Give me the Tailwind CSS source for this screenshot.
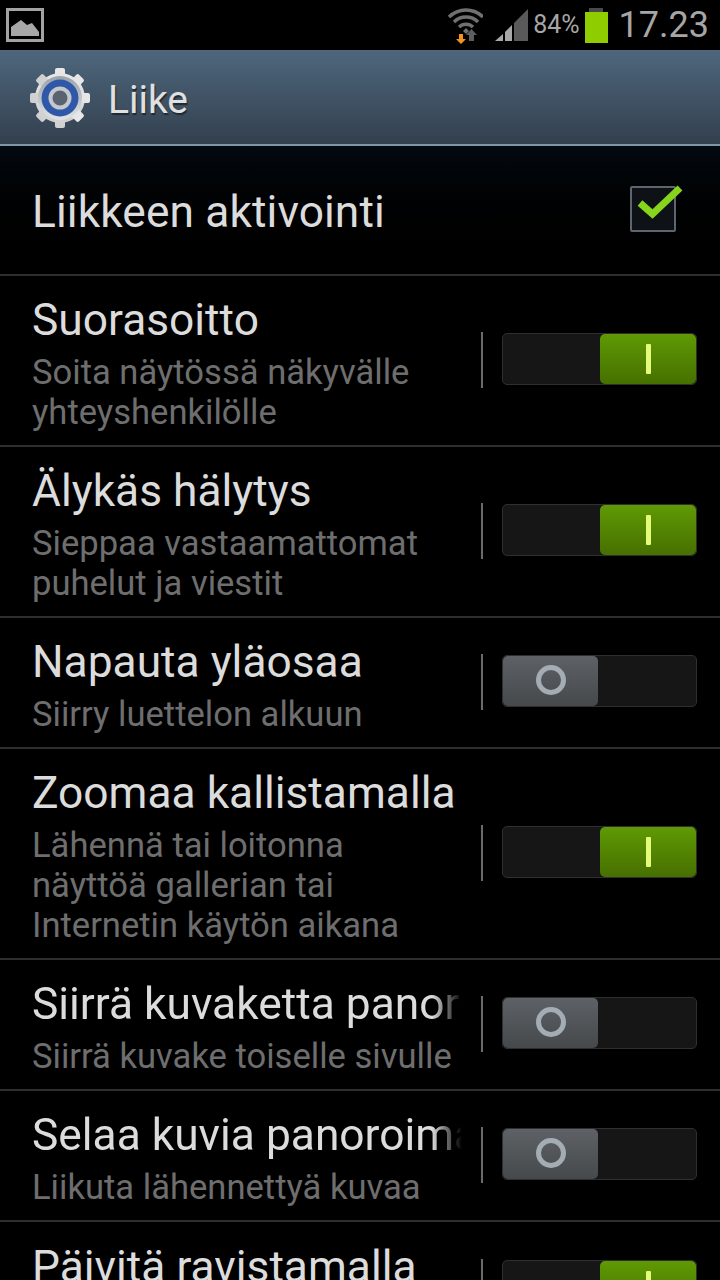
<!DOCTYPE html>
<html lang="fi">
<head>
<meta charset="UTF-8">
<meta name="viewport" content="width=device-width, initial-scale=1.0">
<title>Liike</title>
<script src="https://cdn.jsdelivr.net/npm/@tailwindcss/browser@4"></script>
</head>
<body class="bg-black font-['Roboto',sans-serif]">
<div class="w-[720px] h-[1280px] overflow-hidden bg-black flex flex-col">

  <!-- Status bar -->
  <div class="h-[50px] shrink-0 flex items-center bg-black">
    <svg class="ml-[6px]" width="38" height="34" viewBox="0 0 38 34">
      <rect x="1.5" y="1.5" width="35" height="31" fill="none" stroke="#a3a3a3" stroke-width="3"/>
      <path d="M5 28V19L15 12L21 17L26 15L33 24V28Z" fill="#a8a8a8"/>
    </svg>
    <div class="ml-auto flex items-center">
      <svg width="38" height="40" viewBox="0 0 38 40" class="mt-[1px]">
        <path d="M4 11A24 24 0 0 1 38 11" fill="none" stroke="#707070" stroke-width="3.500"/>
        <path d="M9 16A17 17 0 0 1 33 16" fill="none" stroke="#707070" stroke-width="3.500"/>
        <path d="M14 21A10 10 0 0 1 28 21" fill="none" stroke="#707070" stroke-width="3.500"/>
        <path d="M18 25L21 22L24 25L21 28Z" fill="#707070"/>
        <path d="M24 35V29H21L26.500 23L32 29H29V35Z" fill="#5e5e5e"/>
        <path d="M14 28H18V33H21L16 38L11 33H14Z" fill="#f0941e"/>
      </svg>
      <svg class="ml-[11px]" width="34" height="32" viewBox="0 0 34 32">
        <path d="M1 32L9 25V32Z" fill="#a8a8a8"/>
        <path d="M11 23L18 16V32H11Z" fill="#a8a8a8"/>
        <path d="M20 14L34 0V32H20Z" fill="#5a5a5a"/>
      </svg>
      <span class="ml-[5px] text-[25px] leading-[28px] text-[#a6a6a6]">84%</span>
      <div class="ml-[5px] flex flex-col items-center mt-[1px]">
        <div class="w-[14px] h-[4px] bg-[#4a4a4a]"></div>
        <div class="w-[23px] h-[31px] bg-[#8fcc00]"></div>
      </div>
      <span class="ml-[11px] mr-[11px] text-[36px] leading-[40px] text-[#a6a6a6]">17.23</span>
    </div>
  </div>

  <!-- Action bar -->
  <div class="h-[96px] shrink-0 flex items-center bg-gradient-to-b from-[#4e677d] to-[#33404e] border-b-2 border-[#7f96a8]">
    <svg class="ml-[29px] mt-[1px]" width="62" height="62" viewBox="0 0 62 62">
      <defs>
        <linearGradient id="gear" x1="0" y1="0" x2="0" y2="1"><stop offset="0" stop-color="#e8e8e8"/><stop offset="1" stop-color="#cfcfcf"/></linearGradient>
        <linearGradient id="rim" x1="0" y1="0" x2="0" y2="1"><stop offset="0" stop-color="#9aa2aa"/><stop offset="1" stop-color="#e2e4e6"/></linearGradient>
      </defs>
      <g fill="url(#gear)">
        <circle cx="31" cy="31" r="25"/>
        <rect x="26" y="1" width="10" height="60" rx="2"/>
        <rect x="26" y="1" width="10" height="60" rx="2" transform="rotate(45 31 31)"/>
        <rect x="26" y="1" width="10" height="60" rx="2" transform="rotate(90 31 31)"/>
        <rect x="26" y="1" width="10" height="60" rx="2" transform="rotate(135 31 31)"/>
      </g>
      <circle cx="31" cy="31" r="22" fill="url(#rim)"/>
      <circle cx="31" cy="31" r="18.500" fill="#2f58a8"/>
      <circle cx="31" cy="31" r="9.500" fill="#5a6470" stroke="#c4c8cc" stroke-width="4"/>
    </svg>
    <span class="ml-[17px] mt-[6px] text-[39px] leading-[44px] text-[#e0e0e0] [text-shadow:1px_2px_1px_#1f2933]">Liike</span>
  </div>

  <!-- List -->
  <div class="flex-1 min-h-0">
    <div class="h-[130px] flex items-center justify-between pl-[32px] bg-gradient-to-b from-[#030a10] to-black border-b-2 border-[#2e2e2e]">
      <span class="text-[44.300px] leading-[56px] tracking-[0.1px] text-[#dcdcdc] mt-[4px]">Liikkeen aktivointi</span>
      <div class="relative mr-[44px] mt-[-2px] w-[46px] h-[46px] bg-[#0e1216] border-2 border-[#5d666e] rounded-[2px]">
        <svg class="absolute left-[5px] top-[-4px]" width="48" height="40" viewBox="0 0 48 40">
          <path d="M3 19L15.500 30L43 4" fill="none" stroke="#86d41c" stroke-width="7"/>
        </svg>
      </div>
    </div>

    <div class="h-[171px] flex items-center border-b-2 border-[#2e2e2e]">
      <div class="pl-[32px] w-[462px] shrink-0 mt-[6px]">
        <p class="text-[44.300px] leading-[48px] text-[#dcdcdc]">Suorasoitto</p>
        <p class="text-[34.600px] leading-[40px] text-[#6e6e6e] mt-[8px]">Soita näytössä näkyvälle yhteyshenkilölle</p>
      </div>
      <div class="ml-[19px] mt-[-2px] w-[2px] h-[56px] bg-[#6a6a6a]"></div>
      <div class="ml-[19px] mt-[-4px] w-[195px] h-[52px] flex justify-end bg-[#161616] border border-[#2f2f2f] rounded-[5px]">
        <div class="w-[96px] h-full flex items-center justify-center rounded-[5px] bg-gradient-to-b from-[#5f9a05] to-[#467000]"><div class="w-[5px] h-[30px] bg-[#e4fc7a] rounded-[1px]"></div></div>
      </div>
    </div>

    <div class="h-[171px] flex items-center border-b-2 border-[#2e2e2e]">
      <div class="pl-[32px] w-[462px] shrink-0 mt-[6px]">
        <p class="text-[44.300px] leading-[48px] text-[#dcdcdc]">Älykäs hälytys</p>
        <p class="text-[34.600px] leading-[40px] text-[#6e6e6e] mt-[8px]">Sieppaa vastaamattomat puhelut ja viestit</p>
      </div>
      <div class="ml-[19px] mt-[-2px] w-[2px] h-[56px] bg-[#6a6a6a]"></div>
      <div class="ml-[19px] mt-[-4px] w-[195px] h-[52px] flex justify-end bg-[#161616] border border-[#2f2f2f] rounded-[5px]">
        <div class="w-[96px] h-full flex items-center justify-center rounded-[5px] bg-gradient-to-b from-[#5f9a05] to-[#467000]"><div class="w-[5px] h-[30px] bg-[#e4fc7a] rounded-[1px]"></div></div>
      </div>
    </div>

    <div class="h-[131px] flex items-center border-b-2 border-[#2e2e2e]">
      <div class="pl-[32px] w-[462px] shrink-0 mt-[6px]">
        <p class="text-[44.300px] leading-[48px] text-[#dcdcdc]">Napauta yläosaa</p>
        <p class="text-[34.600px] leading-[40px] text-[#6e6e6e] mt-[8px]">Siirry luettelon alkuun</p>
      </div>
      <div class="ml-[19px] mt-[-2px] w-[2px] h-[56px] bg-[#6a6a6a]"></div>
      <div class="ml-[19px] mt-[-4px] w-[195px] h-[52px] flex bg-[#161616] border border-[#2f2f2f] rounded-[5px]">
        <div class="w-[95px] h-full flex items-center justify-center rounded-[5px] bg-gradient-to-b from-[#5e6266] to-[#45494c]"><div class="w-[30px] h-[30px] mb-[2px] rounded-full border-[5px] border-[#a3adb3]"></div></div>
      </div>
    </div>

    <div class="h-[211px] flex items-center border-b-2 border-[#2e2e2e]">
      <div class="pl-[32px] w-[462px] shrink-0 mt-[6px]">
        <p class="text-[44.300px] leading-[48px] text-[#dcdcdc] whitespace-nowrap">Zoomaa kallistamalla</p>
        <p class="text-[34.600px] leading-[40px] text-[#6e6e6e] mt-[8px]">Lähennä tai loitonna näyttöä gallerian tai Internetin käytön aikana</p>
      </div>
      <div class="ml-[19px] mt-[-2px] w-[2px] h-[56px] bg-[#6a6a6a]"></div>
      <div class="ml-[19px] mt-[-4px] w-[195px] h-[52px] flex justify-end bg-[#161616] border border-[#2f2f2f] rounded-[5px]">
        <div class="w-[96px] h-full flex items-center justify-center rounded-[5px] bg-gradient-to-b from-[#5f9a05] to-[#467000]"><div class="w-[5px] h-[30px] bg-[#e4fc7a] rounded-[1px]"></div></div>
      </div>
    </div>

    <div class="h-[131px] flex items-center border-b-2 border-[#2e2e2e]">
      <div class="pl-[32px] w-[462px] shrink-0 mt-[6px]">
        <p class="text-[44.300px] leading-[48px] text-[#dcdcdc] whitespace-nowrap overflow-hidden [mask-image:linear-gradient(to_right,black_93%,transparent)]">Siirrä kuvaketta panoroimalla</p>
        <p class="text-[34.600px] leading-[40px] text-[#6e6e6e] mt-[8px] whitespace-nowrap">Siirrä kuvake toiselle sivulle</p>
      </div>
      <div class="ml-[19px] mt-[-2px] w-[2px] h-[56px] bg-[#6a6a6a]"></div>
      <div class="ml-[19px] mt-[-4px] w-[195px] h-[52px] flex bg-[#161616] border border-[#2f2f2f] rounded-[5px]">
        <div class="w-[95px] h-full flex items-center justify-center rounded-[5px] bg-gradient-to-b from-[#5e6266] to-[#45494c]"><div class="w-[30px] h-[30px] mb-[2px] rounded-full border-[5px] border-[#a3adb3]"></div></div>
      </div>
    </div>

    <div class="h-[131px] flex items-center border-b-2 border-[#2e2e2e]">
      <div class="pl-[32px] w-[462px] shrink-0 mt-[6px]">
        <p class="text-[44.300px] leading-[48px] text-[#dcdcdc] whitespace-nowrap overflow-hidden [mask-image:linear-gradient(to_right,black_93%,transparent)]">Selaa kuvia panoroimalla</p>
        <p class="text-[34.600px] leading-[40px] text-[#6e6e6e] mt-[8px]">Liikuta lähennettyä kuvaa</p>
      </div>
      <div class="ml-[19px] mt-[-2px] w-[2px] h-[56px] bg-[#6a6a6a]"></div>
      <div class="ml-[19px] mt-[-4px] w-[195px] h-[52px] flex bg-[#161616] border border-[#2f2f2f] rounded-[5px]">
        <div class="w-[95px] h-full flex items-center justify-center rounded-[5px] bg-gradient-to-b from-[#5e6266] to-[#45494c]"><div class="w-[30px] h-[30px] mb-[2px] rounded-full border-[5px] border-[#a3adb3]"></div></div>
      </div>
    </div>

    <div class="h-[131px] flex items-center">
      <div class="pl-[32px] w-[462px] shrink-0 mt-[6px]">
        <p class="text-[44.300px] leading-[48px] text-[#dcdcdc]">Päivitä ravistamalla</p>
        <p class="text-[34.600px] leading-[40px] text-[#6e6e6e] mt-[8px]">&nbsp;</p>
      </div>
      <div class="ml-[19px] mt-[-2px] w-[2px] h-[56px] bg-[#6a6a6a]"></div>
      <div class="ml-[19px] mt-[-4px] w-[195px] h-[52px] flex justify-end bg-[#161616] border border-[#2f2f2f] rounded-[5px]">
        <div class="w-[96px] h-full flex items-center justify-center rounded-[5px] bg-gradient-to-b from-[#5f9a05] to-[#467000]"><div class="w-[5px] h-[30px] bg-[#e4fc7a] rounded-[1px]"></div></div>
      </div>
    </div>
  </div>
</div>
</body>
</html>
